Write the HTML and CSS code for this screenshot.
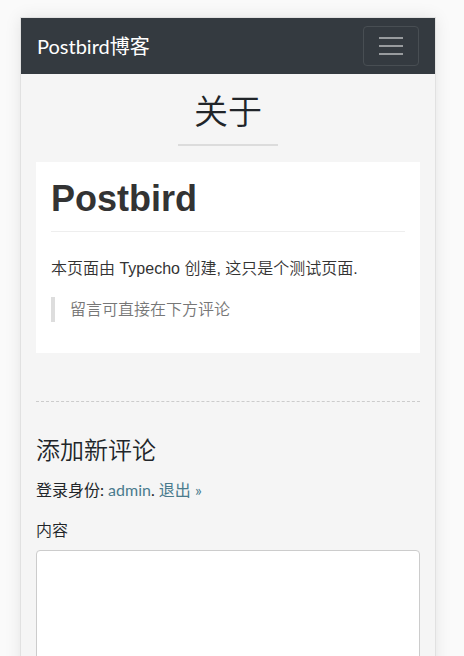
FILE: index.html
```html
<!DOCTYPE html>
<html lang="zh-CN">
<head>
<meta charset="utf-8">
<meta name="viewport" content="width=device-width, initial-scale=1">
<title>关于 - Postbird博客</title>
<link rel="stylesheet" href="styles.css">
</head>
<body>
<div class="page">
  <nav class="navbar">
    <a class="brand" href="#">Postbird博客</a>
    <button class="toggler" type="button" aria-label="菜单">
      <svg class="toggler-icon" viewBox="0 0 30 30" aria-hidden="true">
        <path d="M3 7h24M3 15h24M3 23h24" fill="none" stroke="currentColor" stroke-width="2"/>
      </svg>
    </button>
  </nav>
  <main class="content">
    <header class="page-header">
      <h1 class="page-title">关于</h1>
    </header>
    <article class="card">
      <h1 class="card-title">Postbird</h1>
      <p class="card-text">本页面由 Typecho 创建, 这只是个测试页面.</p>
      <blockquote class="quote">留言可直接在下方评论</blockquote>
    </article>
    <section class="comments">
      <h2 class="comments-title">添加新评论</h2>
      <form class="comment-form">
        <p class="identity">登录身份: <a href="#">admin</a>. <a href="#">退出 »</a></p>
        <label class="label" for="comment">内容</label>
        <textarea class="textarea" id="comment" rows="8"></textarea>
      </form>
    </section>
  </main>
</div>
</body>
</html>
```
FILE: styles.css
```css
* {
  box-sizing: border-box;
}

body {
  height: 100vh;
  margin: 0;
  padding: 18px 29px 0 21px;
  overflow: hidden;
  background: #fafafa;
  color: #212529;
  font: 350 16px/24px Lato, "Noto Sans CJK SC", sans-serif;
}

h1,
h2,
p,
blockquote {
  margin: 0;
}

a {
  color: #497b8d;
  text-decoration: none;
}

.page {
  min-height: 100%;
  background: #f5f5f5;
  box-shadow: 0 0 0 1px #e1e1e1, 0 0 16px rgba(0, 0, 0, 0.1);
}

.navbar {
  display: flex;
  align-items: center;
  justify-content: space-between;
  padding: 8px 16px;
  background: #343a40;
}

.brand {
  color: #fff;
  font-size: 20px;
  font-weight: 400;
  line-height: 32px;
}

.toggler {
  display: flex;
  padding: 4px 12px;
  border: 1px solid #484e53;
  border-radius: 4px;
  background: transparent;
  color: #989b9e;
}

.toggler-icon {
  width: 30px;
  height: 30px;
}

.content {
  padding: 16px 15px;
}

.page-header {
  display: flex;
  flex-direction: column;
  align-items: center;
  gap: 12px;
}

.page-header::after {
  width: 100px;
  height: 2px;
  background: #dcdcdc;
  content: "";
}

.page-title {
  font-size: 34px;
  font-weight: 350;
  line-height: 42px;
}

.card {
  margin-top: 16px;
  padding: 15px 15px 31px;
  background: #fff;
  color: #333;
  font-family: "Liberation Sans", "Noto Sans CJK SC", sans-serif;
  line-height: 25px;
}

.card-title {
  padding-bottom: 11px;
  border-bottom: 1px solid #eee;
  font-size: 36px;
  font-weight: 700;
  line-height: 43px;
}

.card-text {
  margin: 24px 0 16px;
}

.quote {
  padding: 0 15px;
  border-left: 4px solid #ddd;
  color: #777;
}

.comments {
  margin-top: 48px;
  padding-top: 32px;
  border-top: 1px dashed #ccc;
}

.comments-title {
  margin-bottom: 12px;
  font-size: 24px;
  font-weight: 350;
  line-height: 32px;
}

.identity {
  margin-bottom: 16px;
  font-weight: 400;
}

.label {
  display: block;
  margin-bottom: 8px;
}

.textarea {
  display: block;
  width: 100%;
  padding: 6px 12px;
  border: 1px solid #ccc;
  border-radius: 4px;
  background: #fff;
  font: inherit;
  resize: none;
}
```
